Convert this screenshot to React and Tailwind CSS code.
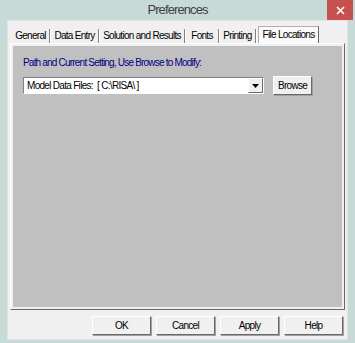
const tabs = [
  { label: 'General', w: 'w-[37px]' },
  { label: 'Data Entry', w: 'w-[47px]' },
  { label: 'Solution and Results', w: 'w-[84px]' },
  { label: 'Fonts', w: 'w-[32px]' },
  { label: 'Printing', w: 'w-[35px]' },
];

function Btn({ children, className = '' }) {
  return (
    <button
      className={`h-[19px] bg-[#f0f0f0] border border-t-white border-l-white border-r-[#696969] border-b-[#696969] shadow-[1px_1px_0_#a0a0a0] text-[10px] tracking-[-0.7px] text-black ${className}`}
    >
      {children}
    </button>
  );
}

export default function App() {
  return (
    <div
      className="w-[355px] h-[343px] bg-[#c6dbd7] flex flex-col overflow-hidden"
      style={{ fontFamily: '"Liberation Sans", Arial, sans-serif' }}
    >
      <div className="h-[20px] flex items-start relative">
        <div className="flex-1 text-center text-[13px] tracking-[-0.9px] leading-[20px] text-[#404040]">Preferences</div>
        <div className="absolute right-[2px] top-0 w-[26px] h-[20px] bg-[#c75050] flex items-center justify-center">
          <svg width="9" height="9" viewBox="0 0 9 9">
            <path d="M1 1L8 8M8 1L1 8" stroke="white" strokeWidth="1.6" />
          </svg>
        </div>
      </div>
      <div className="mx-[7px] mb-[3px] flex-1 bg-[#f0f0f0] border border-[#e3e3e3] flex flex-col px-[2px] pt-[5px]">
        <div className="flex items-end h-[17px] pl-[2px] text-[10px] tracking-[-0.7px] text-black whitespace-nowrap">
          {tabs.map((t) => (
            <div key={t.label} className="flex items-center h-[15px]">
              <span className={`${t.w} text-center leading-[15px]`}>{t.label}</span>
              <span className="w-px h-[14px] bg-[#808080]" />
              <span className="w-px h-[14px] bg-white" />
            </div>
          ))}
          <div className="h-[17px] w-[61px] text-center bg-[#fafafa] border border-b-0 border-[#b0b0b0] border-r-[#696969] leading-[16px] ml-[1px]">
            File Locations
          </div>
        </div>
        <div className="h-[267px] border border-t-white border-l-white border-r-[#696969] border-b-[#696969] p-[2px] bg-[#f0f0f0]">
          <div className="h-full bg-[#c0c0c0] pl-[10px] pt-[10px] flex flex-col">
            <div className="text-[10px] tracking-[-0.8px] text-[#000080] leading-[13px] whitespace-nowrap">Path and Current Setting, Use Browse to Modify:</div>
            <div className="flex items-center mt-[7px]">
              <div className="w-[241px] h-[17px] bg-white border border-t-[#808080] border-l-[#808080] border-r-white border-b-white flex items-center">
                <span className="flex-1 text-[10px] tracking-[-0.7px] pl-[3px] text-black whitespace-pre leading-[15px]">Model Data Files:  [ C:\RISA\ ]</span>
                <span className="w-[15px] h-[15px] bg-[#f0f0f0] border border-t-white border-l-white border-r-[#696969] border-b-[#696969] flex items-center justify-center">
                  <svg width="7" height="4" viewBox="0 0 7 4"><path d="M0 0H7L3.5 4Z" fill="black" /></svg>
                </span>
              </div>
              <Btn className="ml-[9px] w-[39px] h-[19px]">Browse</Btn>
            </div>
          </div>
        </div>
        <div className="flex justify-end gap-[5px] mt-[6px] pr-[2px]">
          <Btn className="w-[59px]">OK</Btn>
          <Btn className="w-[59px]">Cancel</Btn>
          <Btn className="w-[59px]">Apply</Btn>
          <Btn className="w-[59px]">Help</Btn>
        </div>
      </div>
    </div>
  );
}
